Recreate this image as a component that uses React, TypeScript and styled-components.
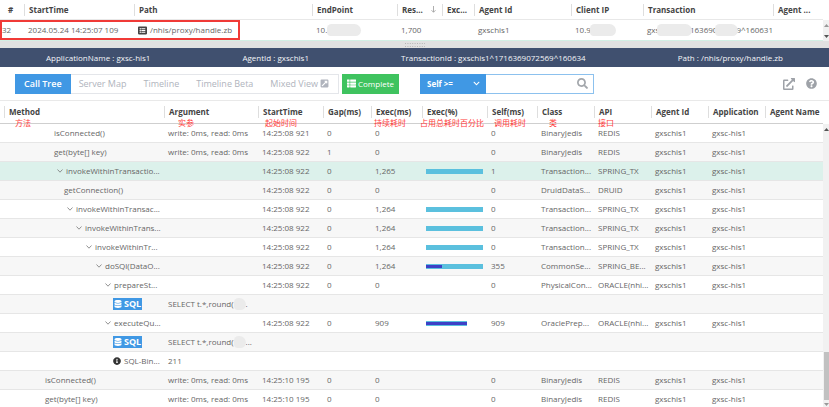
import React from "react";
import styled, { createGlobalStyle } from "styled-components";
import {
  FaChevronDown,
  FaDatabase,
  FaExternalLinkAlt,
  FaExternalLinkSquareAlt,
  FaInfoCircle,
  FaListAlt,
  FaQuestionCircle,
  FaSearch,
  FaThList,
} from "react-icons/fa";

const sans = `"Open Sans", "Noto Sans", "Noto Sans CJK SC", sans-serif`;

const GlobalStyle = createGlobalStyle`
  * { box-sizing: border-box; }
  body { margin: 0; background: #fff; font: 8px/12px ${sans}; color: #666; overflow: hidden; }
  button, input, select { font: inherit; }
`;

const Page = styled.div`
  display: flex;
  flex-direction: column;
  height: 100vh;
`;

const Pane = styled.section<{ $grow?: boolean }>`
  display: grid;
  grid-template-columns: minmax(0, 1fr) 6px;
  flex: ${(p) => (p.$grow ? "1 1 0" : "none")};
  min-height: 0;
  overflow: hidden;
`;

const Table = styled.table`
  width: 100%;
  table-layout: fixed;
  border-collapse: separate;
  border-spacing: 0;
  align-self: start;
`;

const HeadCell = styled.th<{ $tall?: boolean; $lead?: boolean }>`
  position: relative;
  height: ${(p) => (p.$tall ? 23 : 20)}px;
  padding: 0 0 0 ${(p) => (p.$lead ? 4 : 0)}px;
  border-bottom: 1px solid ${(p) => (p.$tall ? "#cfcfcf" : "#e8e8e8")};
  color: #444;
  font-weight: 700;
  text-align: left;
  white-space: nowrap;
`;

const HeadLabel = styled.span<{ $plain?: boolean }>`
  display: flex;
  align-items: center;
  height: 12px;
  padding-left: ${(p) => (p.$plain ? 8 : 4)}px;
  border-left: ${(p) => (p.$plain ? "0" : "1px solid #dedede")};
`;

const Sort = styled.svg`
  width: 5px;
  height: 7px;
  margin-left: 8px;
`;

const Note = styled.span<{ $left: number }>`
  position: absolute;
  left: ${(p) => p.$left}px;
  top: 16px;
  z-index: 1;
  color: #ff3b3b;
  font-weight: 400;
`;

const Row = styled.tr<{ $tone?: "plain" | "stripe" | "active" }>`
  background: ${(p) => (p.$tone === "active" ? "#dcf1eb" : p.$tone === "stripe" ? "#f7f7f7" : "#fff")};
`;

const Cell = styled.td`
  height: 19px;
  padding: 0 0 0 4px;
  border-bottom: 1px solid #e6e6e6;
  white-space: nowrap;
`;

const TopCell = styled.td`
  position: relative;
  height: 21px;
  padding: 0 0 0 4px;
  border-bottom: 1px solid #d3efe4;
  white-space: nowrap;
  &:first-child { padding-left: 2px; }
`;

const Inline = styled.div`
  display: flex;
  align-items: center;
  gap: 3px;
`;

const Masked = styled.div`
  display: flex;
  align-items: center;
`;

const Smudge = styled.span<{ $w: number; $overlap?: number }>`
  position: relative;
  width: ${(p) => p.$w}px;
  height: 12px;
  margin: 0 -${(p) => p.$overlap ?? 0}px;
  border-radius: 5px 7px 6px 4px;
  background: #ebebeb;
`;

const Highlight = styled.span`
  position: absolute;
  left: 0;
  top: 0;
  z-index: 1;
  width: 240px;
  height: 20px;
  border: 2px solid #f03a37;
  pointer-events: none;
`;

const Track = styled.div<{ $offset: number }>`
  display: flex;
  flex-direction: column;
  align-items: center;
  justify-content: space-between;
  margin-top: ${(p) => p.$offset}px;
  padding: 4px 0 3px;
  background: #f1f1f1;
`;

const Thumb = styled.div`
  width: 5px;
  height: 48px;
  margin: auto 0 3px auto;
  background: #c1c1c1;
`;

const Arrow = styled.svg<{ $down?: boolean }>`
  width: 5px;
  height: 3px;
  flex: none;
  transform: ${(p) => (p.$down ? "rotate(180deg)" : "none")};
`;

const Splitter = styled.div`
  display: flex;
  align-items: center;
  justify-content: center;
  height: 7px;
  background: #e1e1e1;
`;

const InfoBar = styled.header`
  display: flex;
  align-items: center;
  justify-content: space-around;
  height: 19px;
  background: #40506f;
  color: #f3f5f8;
`;

const Toolbar = styled.nav`
  display: flex;
  align-items: center;
  height: 34px;
  padding: 0 12px 0 15px;
  border-bottom: 1px solid #e9e9e9;
`;

const Tabs = styled.div`
  display: flex;
  height: 20px;
  border: 1px solid #e4e6ea;
`;

const Tab = styled.button<{ $active?: boolean }>`
  display: flex;
  align-items: center;
  gap: 2px;
  height: 20px;
  margin: -1px 0 0 -1px;
  padding: 0 9px;
  border: 0;
  background: ${(p) => (p.$active ? "#4098e4" : "transparent")};
  color: ${(p) => (p.$active ? "#fff" : "#b0b4bd")};
  font-weight: ${(p) => (p.$active ? 600 : 400)};
  font-size: 9px;
  white-space: nowrap;
`;

const CompleteButton = styled.button`
  display: flex;
  align-items: center;
  gap: 2px;
  height: 20px;
  margin: 0 21px 0 3px;
  padding: 0 5px;
  border: 0;
  background: #3fc35f;
  color: #fff;
`;

const Filter = styled.div`
  display: grid;
  grid-template-columns: 66px 108px;
  height: 20px;
`;

const SelectBox = styled.label`
  position: relative;
  display: flex;
  align-items: center;
  background: #4098e4;
  color: #fff;
  svg { position: absolute; right: 6px; pointer-events: none; }
`;

const Select = styled.select`
  width: 100%;
  height: 20px;
  padding: 0 7px;
  border: 0;
  background: transparent;
  color: #fff;
  font-weight: 700;
  appearance: none;
`;

const SearchBox = styled.label`
  display: flex;
  align-items: center;
  padding-right: 5px;
  border: 1px solid #8cc1ee;
  border-left: 0;
  color: #a3a7ac;
`;

const SearchInput = styled.input`
  flex: 1;
  min-width: 0;
  border: 0;
  outline: 0;
  background: transparent;
`;

const Tools = styled.div`
  display: flex;
  align-items: center;
  gap: 11px;
  margin-left: auto;
`;

const IconButton = styled.button`
  display: flex;
  padding: 0;
  border: 0;
  background: none;
  color: #9ea2a8;
`;

const Method = styled.div<{ $indent: number }>`
  display: flex;
  align-items: center;
  gap: 3px;
  padding-left: ${(p) => p.$indent}px;
`;

const Toggle = styled.svg`
  width: 6px;
  height: 4px;
  flex: none;
`;

const SqlBadge = styled.span`
  display: flex;
  align-items: center;
  gap: 2px;
  height: 12px;
  padding: 0 1px;
  background: #4098e4;
  color: #fff;
  font-size: 9px;
  font-weight: 700;
`;

const Bar = styled.div`
  display: flex;
  align-items: center;
  height: 5px;
  background: #5bc0de;
`;

const BarSelf = styled.div`
  height: 3px;
  background: #3d40c6;
`;

const BarFrame = styled.div`
  margin-right: 4px;
`;

function ScrollArrow({ down, color = "#555" }: { down?: boolean; color?: string }) {
  return (
    <Arrow $down={down} viewBox="0 0 5 3" aria-hidden>
      <path d="M0 3L2.5 0L5 3Z" fill={color} />
    </Arrow>
  );
}

const topColumns = [
  { label: "#", width: 24 },
  { label: "StartTime", width: 110 },
  { label: "Path", width: 178 },
  { label: "EndPoint", width: 85 },
  { label: "Res...", width: 45 },
  { label: "Exc...", width: 32 },
  { label: "Agent Id", width: 97 },
  { label: "Client IP", width: 72 },
  { label: "Transaction", width: 130 },
  { label: "Agent ...", width: 50 },
];

const columns = [
  { label: "Method", width: 164, note: "方法", at: 15 },
  { label: "Argument", width: 94, note: "实参", at: 14 },
  { label: "StartTime", width: 65, note: "起始时间", at: 7 },
  { label: "Gap(ms)", width: 48 },
  { label: "Exec(ms)", width: 51, note: "持续耗时", at: 3 },
  { label: "Exec(%)", width: 65, note: "占用总耗时百分比", at: -2 },
  { label: "Self(ms)", width: 50, note: "调用耗时", at: 7 },
  { label: "Class", width: 57, note: "类", at: 12 },
  { label: "API", width: 57, note: "接口", at: 4 },
  { label: "Agent Id", width: 57 },
  { label: "Application", width: 57 },
  { label: "Agent Name", width: 58 },
];

type Call = {
  method: string;
  indent: number;
  kind?: "open" | "sql" | "info";
  arg?: string;
  masked?: string;
  time?: string;
  gap?: string;
  exec?: string;
  bar?: number;
  selfBar?: number;
  self?: string;
  cls?: string;
  api?: string;
  active?: boolean;
};

const rw = "write: 0ms, read: 0ms";
const t922 = "14:25:08 922";

const calls: Call[] = [
  { method: "isConnected()", indent: 50, arg: rw, time: "14:25:08 921", gap: "0", exec: "0", self: "0", cls: "BinaryJedis", api: "REDIS" },
  { method: "get(byte[] key)", indent: 50, arg: rw, time: t922, gap: "1", exec: "0", self: "0", cls: "BinaryJedis", api: "REDIS" },
  { method: "invokeWithinTransactio...", indent: 53, kind: "open", time: t922, gap: "0", exec: "1,265", bar: 100, self: "1", cls: "Transaction...", api: "SPRING_TX", active: true },
  { method: "getConnection()", indent: 60, time: t922, gap: "0", exec: "0", self: "0", cls: "DruidDataS...", api: "DRUID" },
  { method: "invokeWithinTransac...", indent: 63, kind: "open", time: t922, gap: "0", exec: "1,264", bar: 100, self: "0", cls: "Transaction...", api: "SPRING_TX" },
  { method: "invokeWithinTrans...", indent: 72, kind: "open", time: t922, gap: "0", exec: "1,264", bar: 100, self: "0", cls: "Transaction...", api: "SPRING_TX" },
  { method: "invokeWithinTr...", indent: 82, kind: "open", time: t922, gap: "0", exec: "1,264", bar: 100, self: "0", cls: "Transaction...", api: "SPRING_TX" },
  { method: "doSQl(DataO...", indent: 92, kind: "open", time: t922, gap: "0", exec: "1,264", bar: 100, selfBar: 28, self: "355", cls: "CommonSe...", api: "SPRING_BE..." },
  { method: "prepareSt...", indent: 101, kind: "open", time: t922, gap: "0", exec: "0", self: "0", cls: "PhysicalCon...", api: "ORACLE(nhi..." },
  { method: "SQL", indent: 109, kind: "sql", arg: "SELECT t.*,round(", masked: "." },
  { method: "executeQu...", indent: 101, kind: "open", time: t922, gap: "0", exec: "909", bar: 72, selfBar: 100, self: "909", cls: "OraclePrep...", api: "ORACLE(nhi..." },
  { method: "SQL", indent: 109, kind: "sql", arg: "SELECT t.*,round(", masked: "..." },
  { method: "SQL-Bin...", indent: 109, kind: "info", arg: "211" },
  { method: "isConnected()", indent: 41, arg: rw, time: "14:25:10 195", gap: "0", exec: "0", self: "0", cls: "BinaryJedis", api: "REDIS" },
  { method: "get(byte[] key)", indent: 41, arg: rw, time: "14:25:10 195", gap: "0", exec: "0", self: "0", cls: "BinaryJedis", api: "REDIS" },
];

function MethodName({ call }: { call: Call }) {
  return (
    <Method $indent={call.indent}>
      {call.kind === "open" && (
        <Toggle viewBox="0 0 6 4" aria-hidden>
          <path d="M0.5 0.5L3 3.2L5.5 0.5" fill="none" stroke="#777" strokeWidth="0.8" />
        </Toggle>
      )}
      {call.kind === "info" && <FaInfoCircle size={8} color="#333" />}
      {call.kind === "sql" ? (
        <SqlBadge>
          <FaDatabase size={8} />
          SQL
        </SqlBadge>
      ) : (
        call.method
      )}
    </Method>
  );
}

function CallRow({ call, index }: { call: Call; index: number }) {
  const linked = Boolean(call.cls);
  return (
    <Row $tone={call.active ? "active" : index % 2 ? "stripe" : "plain"}>
      <Cell><MethodName call={call} /></Cell>
      <Cell>
        <Masked>
          {call.arg}
          {call.masked && <><Smudge $w={12} />{call.masked}</>}
        </Masked>
      </Cell>
      <Cell>{call.time}</Cell>
      <Cell>{call.gap}</Cell>
      <Cell>{call.exec}</Cell>
      <Cell>
        {call.bar && (
          <BarFrame>
            <Bar style={{ width: `${call.bar}%` }}>
              {call.selfBar && <BarSelf style={{ width: `${call.selfBar}%` }} />}
            </Bar>
          </BarFrame>
        )}
      </Cell>
      <Cell>{call.self}</Cell>
      <Cell>{call.cls}</Cell>
      <Cell>{call.api}</Cell>
      <Cell>{linked && "gxschis1"}</Cell>
      <Cell>{linked && "gxsc-his1"}</Cell>
      <Cell />
    </Row>
  );
}

export default function App() {
  return (
    <Page>
      <GlobalStyle />
      <Pane>
        <Table>
          <colgroup>
            {topColumns.map((c) => <col key={c.label} width={c.width} />)}
          </colgroup>
          <thead>
            <tr>
              {topColumns.map((c, i) => (
                <HeadCell key={c.label}>
                  <HeadLabel $plain={i === 0}>
                    {c.label}
                    {c.label === "Res..." && (
                      <Sort viewBox="0 0 5 7" aria-hidden>
                        <path d="M2.5 0V6M0.5 4.2L2.5 6.3L4.5 4.2" fill="none" stroke="#999" strokeWidth="0.8" />
                      </Sort>
                    )}
                  </HeadLabel>
                </HeadCell>
              ))}
            </tr>
          </thead>
          <tbody>
            <Row>
              <TopCell>32<Highlight /></TopCell>
              <TopCell>2024.05.24 14:25:07 109</TopCell>
              <TopCell>
                <Inline><FaListAlt size={9} color="#444" />/nhis/proxy/handle.zb</Inline>
              </TopCell>
              <TopCell><Masked>10.<Smudge $w={34} /></Masked></TopCell>
              <TopCell>1,700</TopCell>
              <TopCell />
              <TopCell>gxschis1</TopCell>
              <TopCell><Masked>10.9<Smudge $w={26} $overlap={1} /></Masked></TopCell>
              <TopCell>
                <Masked>gxs<Smudge $w={36} $overlap={2} />163690<Smudge $w={24} $overlap={2} />9^160631</Masked>
              </TopCell>
              <TopCell />
            </Row>
          </tbody>
        </Table>
        <Track $offset={20}>
          <ScrollArrow color="#999" />
          <ScrollArrow down />
        </Track>
      </Pane>
      <Splitter>
        <svg width="20" height="4" viewBox="0 0 20 4" aria-hidden>
          <path d="M0 0.5H20M0 3.5H20" stroke="#b5b5b5" strokeDasharray="1 1.4" />
        </svg>
      </Splitter>
      <InfoBar>
        <span>ApplicationName : gxsc-his1</span>
        <span>AgentId : gxschis1</span>
        <span>TransactionId : gxschis1^1716369072569^160634</span>
        <span>Path : /nhis/proxy/handle.zb</span>
      </InfoBar>
      <Toolbar>
        <Tabs>
          <Tab $active>Call Tree</Tab>
          <Tab>Server Map</Tab>
          <Tab>Timeline</Tab>
          <Tab>Timeline Beta</Tab>
          <Tab>Mixed View <FaExternalLinkSquareAlt size={9} /></Tab>
        </Tabs>
        <CompleteButton><FaThList size={9} />Complete</CompleteButton>
        <Filter>
          <SelectBox>
            <Select aria-label="Filter field" defaultValue="self">
              <option value="self">Self &gt;=</option>
            </Select>
            <FaChevronDown size={7} />
          </SelectBox>
          <SearchBox>
            <SearchInput aria-label="Filter value" />
            <FaSearch size={11} />
          </SearchBox>
        </Filter>
        <Tools>
          <IconButton aria-label="Open in new window"><FaExternalLinkAlt size={12} /></IconButton>
          <IconButton aria-label="Help"><FaQuestionCircle size={11} /></IconButton>
        </Tools>
      </Toolbar>
      <Pane $grow>
        <Table>
          <colgroup>
            {columns.map((c) => <col key={c.label} width={c.width} />)}
          </colgroup>
          <thead>
            <tr>
              {columns.map((c, i) => (
                <HeadCell key={c.label} $tall $lead={i === 0}>
                  <HeadLabel>{c.label}</HeadLabel>
                  {c.note && <Note $left={c.at ?? 0}>{c.note}</Note>}
                </HeadCell>
              ))}
            </tr>
          </thead>
          <tbody>
            {calls.map((call, i) => <CallRow key={i} call={call} index={i} />)}
          </tbody>
        </Table>
        <Track $offset={23}>
          <ScrollArrow />
          <Thumb />
          <ScrollArrow down color="#999" />
        </Track>
      </Pane>
    </Page>
  );
}
